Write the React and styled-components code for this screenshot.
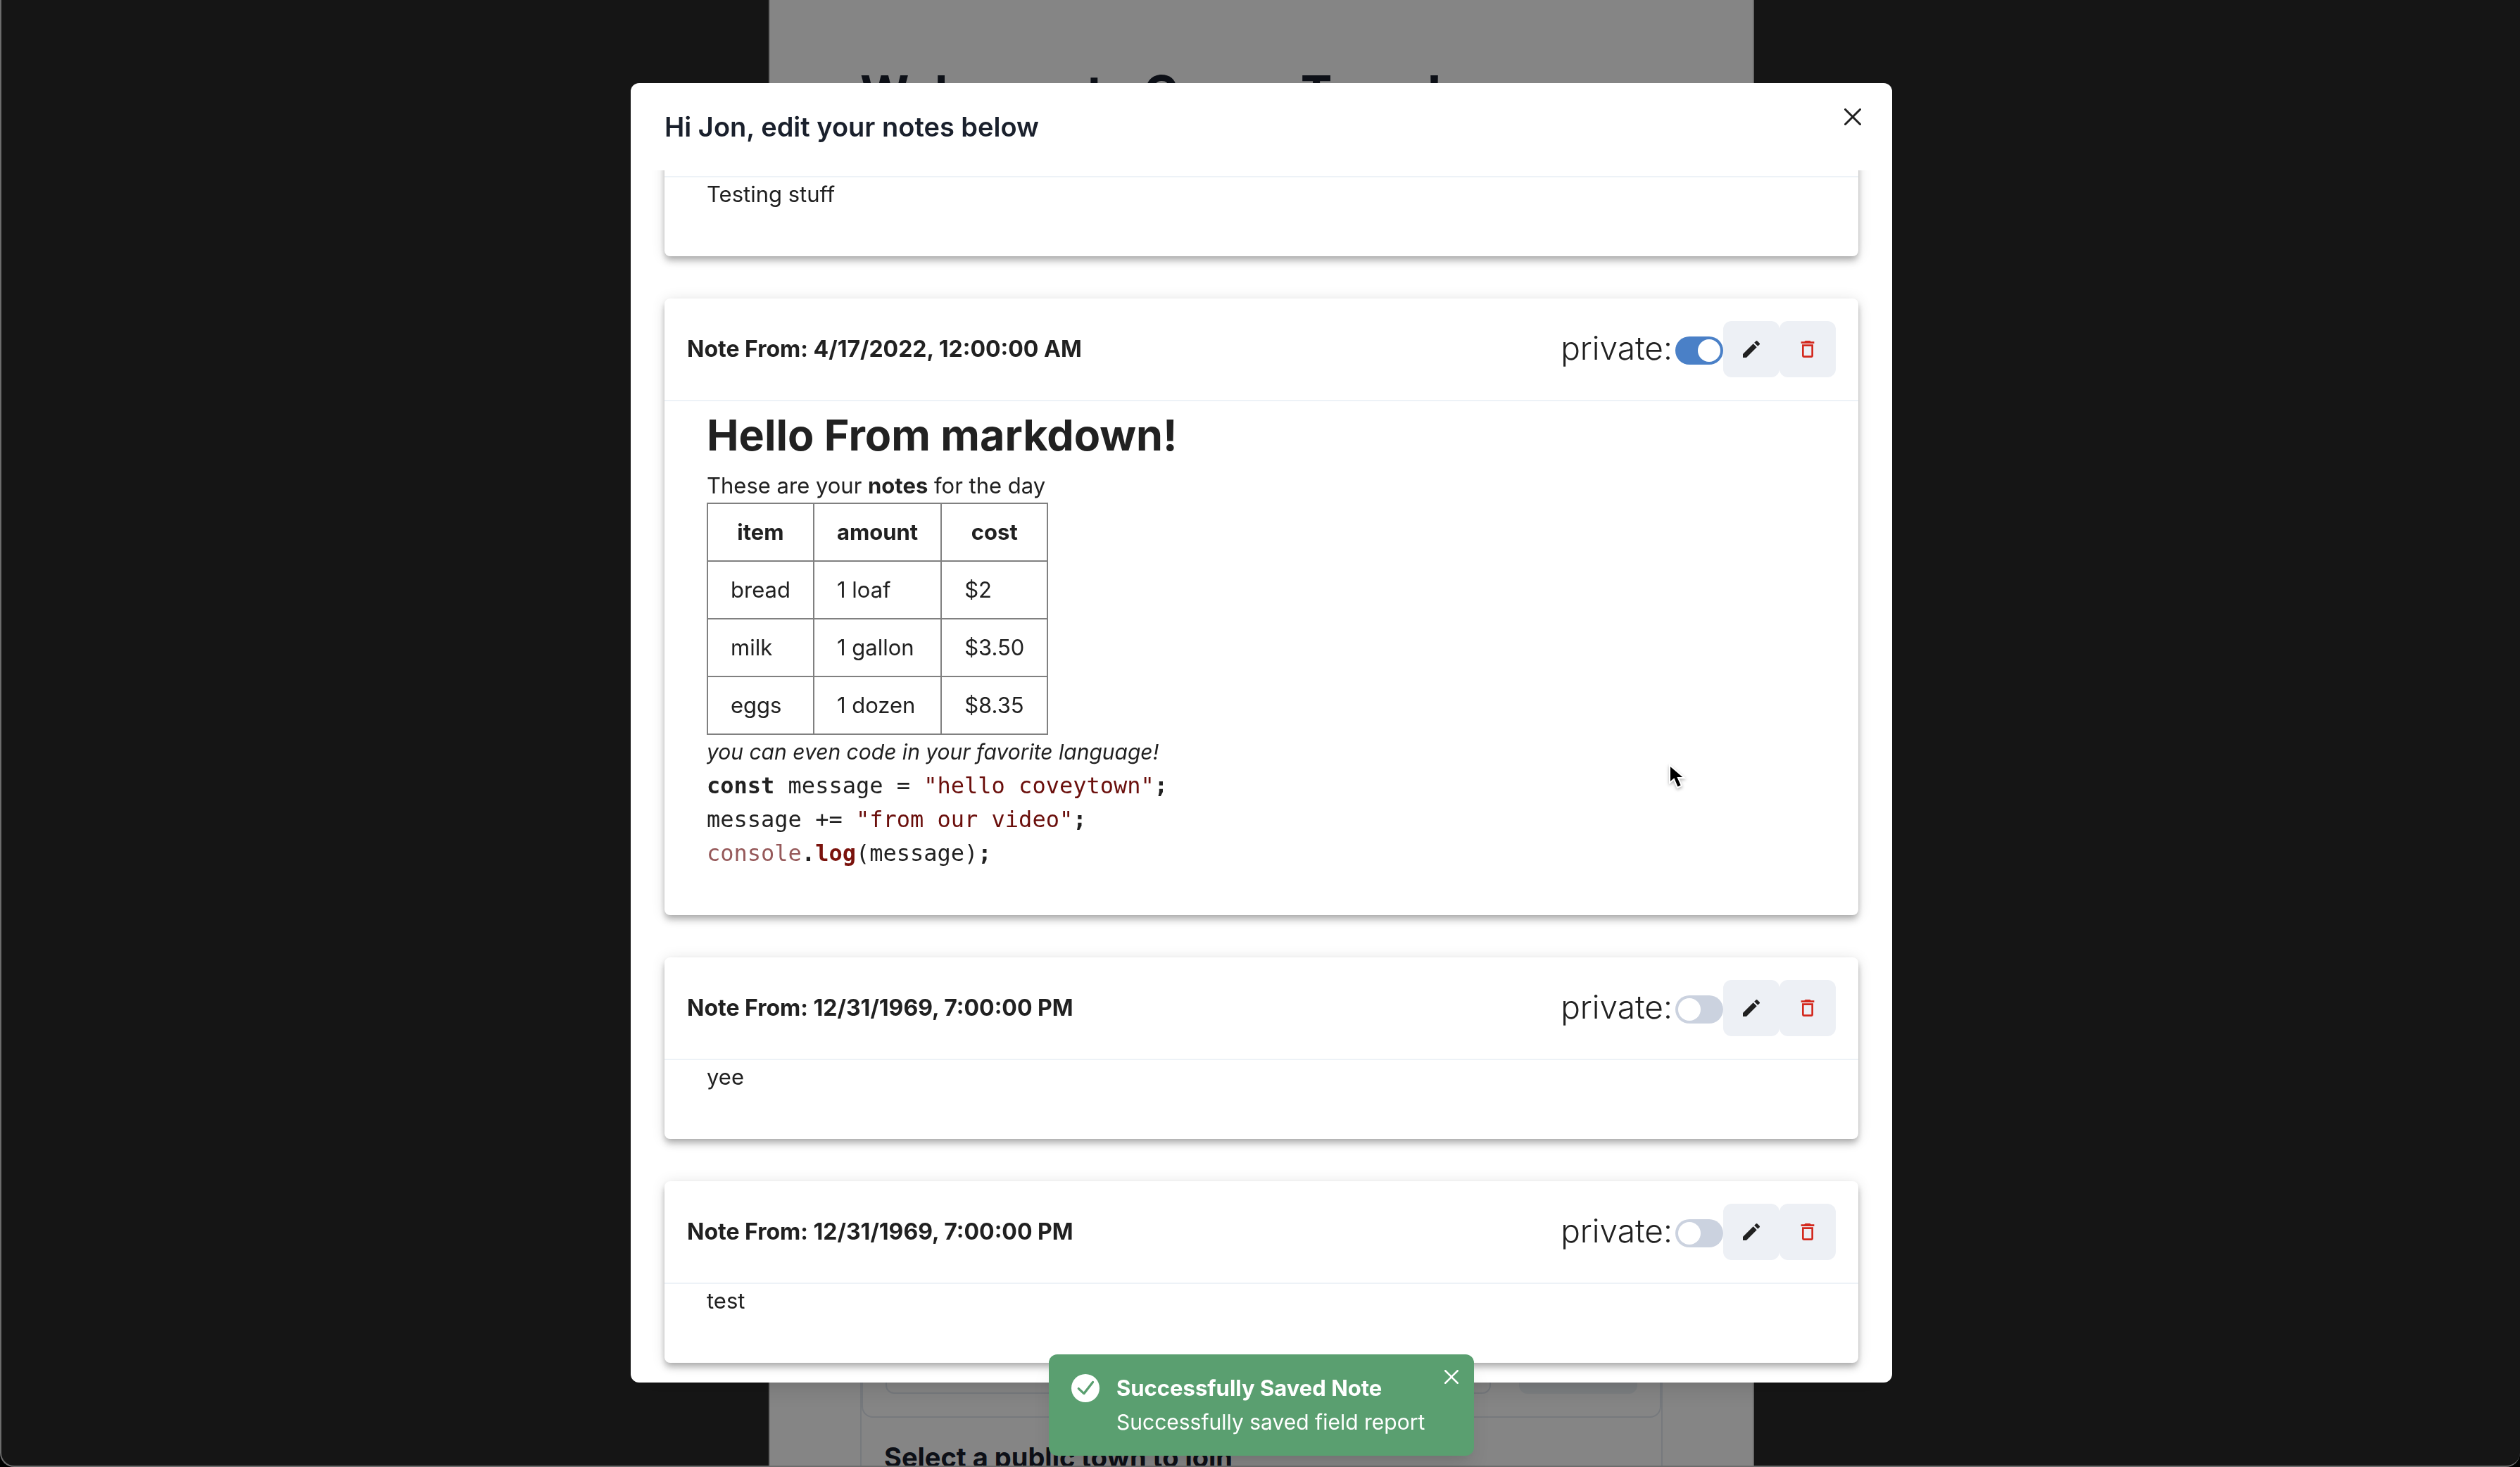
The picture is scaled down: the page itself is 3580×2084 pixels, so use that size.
import React, { useState } from "react";
import styled, { createGlobalStyle } from "styled-components";
import { MdEdit, MdDeleteOutline } from "react-icons/md";

const sans = `Inter, "Liberation Sans", sans-serif`;
const mono = `"DejaVu Sans Mono", "Liberation Mono", monospace`;

const GlobalStyle = createGlobalStyle`
  *, *::before, *::after { box-sizing: border-box; }
  html, body, #root { height: 100%; }
  body { margin: 0; background: #000; font-family: ${sans}; font-size: 31px; line-height: 48px; color: #212121; }
  h1, h2, h3, h4, p, pre { margin: 0; }
  button { font: inherit; border: 0; padding: 0; cursor: pointer; }
`;

const Window = styled.div`
  position: relative;
  height: 100vh;
  display: flex;
  justify-content: center;
  overflow: hidden;
  padding-left: 2px;
  background: #2a2a2a;
  border-left: 2px solid #cfcfcf;
  border-bottom: 2px solid #cfcfcf;
  border-radius: 0 0 20px 20px;
`;

const Lobby = styled.main`
  width: 1400px;
  max-width: 100%;
  display: flex;
  flex-direction: column;
  padding: 88px 128px 0;
  background: #fff;
  border: solid #ccc;
  border-width: 0 2px;
  color: #1a202c;
`;

const Welcome = styled.h1`
  font-size: 67px;
  line-height: 88px;
  font-weight: 700;
`;

const Sections = styled.div`
  flex: 1;
  display: flex;
  flex-direction: column;
  margin-top: 64px;
  border: solid #e2e8f0;
  border-width: 0 2px;
`;

const FormPanel = styled.section`
  flex: 1;
  display: flex;
  align-items: flex-end;
  gap: 40px;
  padding: 32px;
  border: 2px solid #e2e8f0;
  border-radius: 16px;
`;

const TownInput = styled.input`
  flex: 1;
  min-width: 0;
  height: 80px;
  padding: 0 32px;
  border: 2px solid #e2e8f0;
  border-radius: 12px;
  font: inherit;
`;

const JoinButton = styled.button`
  width: 168px;
  height: 80px;
  border-radius: 12px;
  background: #edf2f7;
`;

const PublicTowns = styled.section`
  flex: 0 0 68px;
  padding: 32px 32px 0;
  overflow: hidden;
`;

const PublicTownsTitle = styled.h4`
  font-size: 38px;
  line-height: 48px;
  font-weight: 700;
`;

const Overlay = styled.div`
  position: fixed;
  inset: 0;
  display: flex;
  justify-content: center;
  align-items: flex-start;
  padding: 118px 0 120px 4px;
  background: rgba(0, 0, 0, 0.48);
`;

const Dialog = styled.section`
  position: relative;
  display: flex;
  flex-direction: column;
  width: 1792px;
  max-width: 100%;
  height: 100%;
  background: #fff;
  border-radius: 12px;
  box-shadow: 0 20px 30px -6px rgba(0, 0, 0, 0.1), 0 8px 12px -4px rgba(0, 0, 0, 0.05);
`;

const DialogHeader = styled.header`
  display: flex;
  padding: 32px 48px;
`;

const DialogTitle = styled.h2`
  font-size: 38px;
  line-height: 60px;
  font-weight: 600;
  color: #1a202c;
`;

const CloseButton = styled.button`
  position: absolute;
  top: ${(p) => (p.$small ? 8 : 16)}px;
  right: ${(p) => (p.$small ? 8 : 24)}px;
  width: ${(p) => (p.$small ? 48 : 64)}px;
  height: ${(p) => (p.$small ? 48 : 64)}px;
  display: flex;
  align-items: center;
  justify-content: center;
  background: none;
  color: inherit;
`;

const NoteList = styled.div`
  flex: 1;
  min-height: 0;
  display: flex;
  flex-direction: column;
  justify-content: flex-end;
  gap: 60px;
  padding: 0 48px 28px;
  overflow: hidden;
`;

const NoteCard = styled.article`
  flex: none;
  background: #fff;
  border-radius: 8px;
  box-shadow: 0 4px 8px -2px rgba(0, 0, 0, 0.2), 0 8px 10px 0 rgba(0, 0, 0, 0.14), 0 2px 20px 0 rgba(0, 0, 0, 0.12);
`;

const NoteHeader = styled.header`
  display: flex;
  align-items: center;
  justify-content: space-between;
  min-height: 146px;
  padding: 32px;
  border-bottom: 2px solid #edf2f7;
`;

const NoteTitle = styled.h3`
  font-size: 32px;
  line-height: 48px;
  font-weight: 700;
`;

const NoteActions = styled.div`
  display: flex;
  align-items: center;
`;

const PrivateLabel = styled.label`
  padding: 0 4px 4px 0;
  font-size: 46px;
  line-height: 72px;
  font-weight: 300;
`;

const Switch = styled.input`
  appearance: none;
  display: flex;
  width: 68px;
  height: 40px;
  margin: 4px 0 0;
  padding: 4px;
  border-radius: 20px;
  background: #cbd2df;
  cursor: pointer;
  &::before {
    content: "";
    width: 32px;
    height: 32px;
    border-radius: 50%;
    background: #fff;
  }
  &:checked {
    justify-content: flex-end;
    background: #4a80c7;
  }
`;

const IconButton = styled.button`
  width: 80px;
  height: 80px;
  display: flex;
  align-items: center;
  justify-content: center;
  border-radius: 12px;
  background: #edf0f5;
  color: ${(p) => (p.$danger ? "#d3291e" : "#212121")};
  font-size: 32px;
`;

const NoteBody = styled.div`
  padding: 0 60px 64px;
`;

const NoteHeading = styled.h1`
  font-size: 61px;
  line-height: 96px;
  font-weight: 700;
`;

const NoteTable = styled.table`
  border-collapse: collapse;
  th, td {
    height: 82px;
    padding: 16px 32px;
    border: 2px solid #808080;
    text-align: left;
  }
  th { font-weight: 700; text-align: center; }
`;

const Emphasis = styled.em`
  font-size: 30px;
`;

const Code = styled.pre`
  font-family: ${mono};
  font-size: 32px;
  line-height: 48px;
`;

const Token = styled.span`
  color: ${(p) => p.$color || "inherit"};
  font-weight: ${(p) => (p.$bold ? 700 : 400)};
`;

const Toast = styled.div`
  position: fixed;
  left: calc(50% + 2px);
  bottom: 16px;
  transform: translateX(-50%);
  display: flex;
  gap: 24px;
  min-width: 604px;
  padding: 24px 64px 24px 32px;
  background: #5a9f70;
  color: #fff;
  border-radius: 12px;
  box-shadow: 0 20px 30px -6px rgba(0, 0, 0, 0.1), 0 8px 12px -4px rgba(0, 0, 0, 0.05);
`;

const ToastTitle = styled.p`
  font-size: 31px;
  font-weight: 700;
`;

const ToastText = styled.p`
  font-size: 30px;
`;

const ToastIcon = styled.svg`
  flex: none;
  width: 40px;
  height: 48px;
`;

const Pointer = styled.svg`
  position: fixed;
  left: 2370px;
  top: 1083px;
  pointer-events: none;
  filter: drop-shadow(0 2px 2px rgba(0, 0, 0, 0.3));
`;

function CloseIcon({ size }) {
  return (
    <svg width={size} height={size} viewBox="0 0 24 24" aria-hidden="true">
      <path
        fill="currentColor"
        d="M.439,21.44a1.5,1.5,0,0,0,2.122,2.121L11.823,14.3a.25.25,0,0,1,.354,0l9.262,9.263a1.5,1.5,0,1,0,2.122-2.121L14.3,12.177a.25.25,0,0,1,0-.354l9.263-9.262A1.5,1.5,0,0,0,21.439.44L12.177,9.7a.25.25,0,0,1-.354,0L2.561.44A1.5,1.5,0,0,0,.439,2.561L9.7,11.823a.25.25,0,0,1,0,.354Z"
      />
    </svg>
  );
}

function Note({ id, title, isPrivate, children }) {
  const [checked, setChecked] = useState(Boolean(isPrivate));
  return (
    <NoteCard>
      <NoteHeader>
        {title && (
          <>
            <NoteTitle>{title}</NoteTitle>
            <NoteActions>
              <PrivateLabel htmlFor={id}>private:</PrivateLabel>
              <Switch id={id} type="checkbox" checked={checked} onChange={(e) => setChecked(e.target.checked)} />
              <IconButton aria-label="Edit note"><MdEdit /></IconButton>
              <IconButton aria-label="Delete note" $danger><MdDeleteOutline /></IconButton>
            </NoteActions>
          </>
        )}
      </NoteHeader>
      <NoteBody>{children}</NoteBody>
    </NoteCard>
  );
}

const groceries = [
  ["bread", "1 loaf", "$2"],
  ["milk", "1 gallon", "$3.50"],
  ["eggs", "1 dozen", "$8.35"],
];

export default function App() {
  return (
    <>
      <GlobalStyle />
      <Window>
        <Lobby>
          <Welcome>Welcome to Covey Town!</Welcome>
          <Sections>
            <FormPanel>
              <TownInput aria-label="Town ID" />
              <JoinButton aria-label="Connect" />
            </FormPanel>
            <PublicTowns>
              <PublicTownsTitle>Select a public town to join</PublicTownsTitle>
            </PublicTowns>
          </Sections>
        </Lobby>
        <Overlay>
          <Dialog role="dialog" aria-labelledby="dialog-title">
            <DialogHeader>
              <DialogTitle id="dialog-title">Hi Jon, edit your notes below</DialogTitle>
            </DialogHeader>
            <CloseButton aria-label="Close"><CloseIcon size={24} /></CloseButton>
            <NoteList>
              <Note id="note-0"><p>Testing stuff</p></Note>
              <Note id="note-1" title="Note From: 4/17/2022, 12:00:00 AM" isPrivate>
                <NoteHeading>Hello From markdown!</NoteHeading>
                <p>These are your <strong>notes</strong> for the day</p>
                <NoteTable>
                  <thead>
                    <tr><th>item</th><th>amount</th><th>cost</th></tr>
                  </thead>
                  <tbody>
                    {groceries.map((row) => (
                      <tr key={row[0]}>{row.map((cell) => <td key={cell}>{cell}</td>)}</tr>
                    ))}
                  </tbody>
                </NoteTable>
                <p><Emphasis>you can even code in your favorite language!</Emphasis></p>
                <Code>
                  <Token $bold>const</Token> message = <Token $color="#6b0f0c">"hello coveytown"</Token><Token $bold>;</Token>{"\n"}
                  message += <Token $color="#6b0f0c">"from our video"</Token><Token $bold>;</Token>{"\n"}
                  <Token $color="#96595a">console</Token><Token $bold>.</Token><Token $bold $color="#7a120c">log</Token>(message)<Token $bold>;</Token>
                </Code>
              </Note>
              <Note id="note-2" title="Note From: 12/31/1969, 7:00:00 PM"><p>yee</p></Note>
              <Note id="note-3" title="Note From: 12/31/1969, 7:00:00 PM"><p>test</p></Note>
            </NoteList>
          </Dialog>
        </Overlay>
        <Toast role="status">
          <ToastIcon viewBox="2 0 20 24" aria-hidden="true">
            <path
              fill="currentColor"
              d="M12 2a10 10 0 1 0 0 20 10 10 0 0 0 0-20zm5.9 6.2-6.2 8a1 1 0 0 1-1.5.1l-3.6-3.4a.8.8 0 0 1 1.1-1.2l3.1 2.9 5.8-7.4a.8.8 0 0 1 1.3 1z"
            />
          </ToastIcon>
          <div>
            <ToastTitle>Successfully Saved Note</ToastTitle>
            <ToastText>Successfully saved field report</ToastText>
          </div>
          <CloseButton $small aria-label="Dismiss"><CloseIcon size={20} /></CloseButton>
        </Toast>
        <Pointer width="28" height="40" viewBox="0 0 28 40" aria-hidden="true">
          <path d="M2 4v25l6-5 5 12 6-3-5-11h9z" fill="#000" stroke="#fff" strokeWidth="2" />
        </Pointer>
      </Window>
    </>
  );
}
